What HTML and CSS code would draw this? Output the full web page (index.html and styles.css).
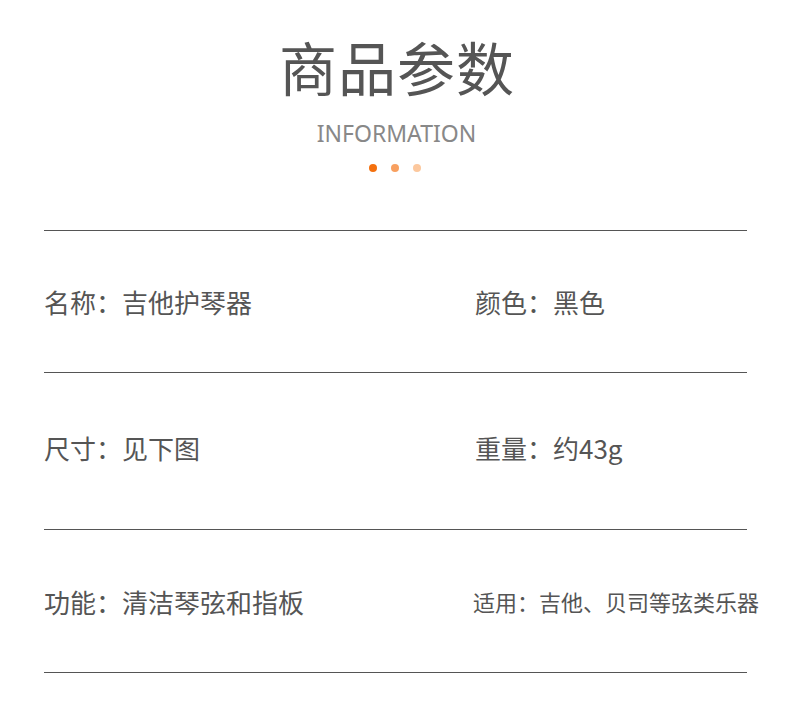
FILE: index.html
```html
<!DOCTYPE html>
<html lang="zh-CN">
<head>
    <meta charset="UTF-8">
    <title>商品参数</title>
    <link rel="stylesheet" href="styles.css">
</head>
<body>
    <div class="header">
        <h1 class="title">商品参数</h1>
        <div class="subtitle">INFORMATION</div>
        <div class="dots">
            <span class="dot dot-1"></span>
            <span class="dot dot-2"></span>
            <span class="dot dot-3"></span>
        </div>
    </div>

    <div class="params">
        <div class="param-row row-1">
            <div class="param-cell">名称：吉他护琴器</div>
            <div class="param-cell">颜色：黑色</div>
        </div>
        <div class="param-row row-2">
            <div class="param-cell">尺寸：见下图</div>
            <div class="param-cell">重量：约43g</div>
        </div>
        <div class="param-row row-3">
            <div class="param-cell">功能：清洁琴弦和指板</div>
            <div class="param-cell small">适用：吉他、贝司等弦类乐器</div>
        </div>
    </div>
</body>
</html>
```

FILE: styles.css
```css
body {
    margin: 0;
    background: #fff;
    font-family: "Noto Sans CJK SC", "Noto Sans", sans-serif;
    color: #555;
}
.header {
    text-align: center;
    padding-top: 26px;
}
.title {
    margin: 0 0 0 4px;
    font-size: 58px;
    font-weight: normal;
    line-height: 80px;
    color: #555;
    letter-spacing: 1px;
}
.subtitle {
    margin-top: 12px;
    margin-left: 3px;
    font-family: "Noto Sans", sans-serif;
    font-size: 23px;
    line-height: 30px;
    color: #888;
}
.dots {
    display: flex;
    justify-content: center;
    gap: 14px;
    margin-top: 16px;
}
.dot {
    width: 8px;
    height: 8px;
    border-radius: 50%;
}
.dot-1 {
    background: #f4700e;
}
.dot-2 {
    background: #f8a060;
}
.dot-3 {
    background: #fcc89e;
}
.params {
    margin: 58px 43px 0 44px;
    border-bottom: 1px solid #555;
}
.param-row {
    display: flex;
    align-items: center;
    border-top: 1px solid #555;
    font-size: 26px;
}
.row-1 {
    height: 141px;
}
.row-2 {
    height: 148px;
    padding-bottom: 8px;
}
.row-3 {
    height: 142px;
}
.param-cell {
    flex: 0 0 431px;
}
.param-cell + .param-cell {
    flex: 1;
}
.param-cell.small {
    font-size: 22px;
    margin-left: -2px;
    white-space: nowrap;
}
```
